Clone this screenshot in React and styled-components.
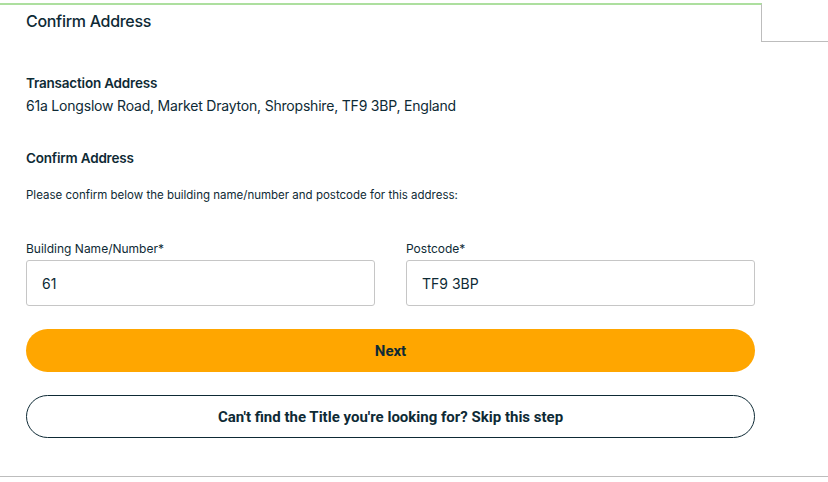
import React from 'react'
import styled, {createGlobalStyle} from 'styled-components'

const Global = createGlobalStyle`
  body {
    margin: 0;
    background: #fff;
    font-family: Inter, "Open Sans", sans-serif;
    color: #0e2a35;
  }
`

const Page = styled.div`
  width: 828px;
  height: 482px;
  padding-top: 3px;
  box-sizing: border-box;
  display: flex;
  flex-direction: column;
`

const TabRow = styled.div`
  display: flex;
  height: 39px;
`

const Tab = styled.div`
  width: 762px;
  box-sizing: border-box;
  border-top: 2px solid #addf9f;
  border-right: 1px solid #bdbdbd;
  padding: 6px 0 0 26px;
  font-size: 16px;
  font-weight: 500;
  letter-spacing: -0.3px;
`

const TabFiller = styled.div`
  flex: 1;
  border-bottom: 1px solid #bdbdbd;
`

const Body = styled.div`
  flex: 1;
  padding: 33px 0 0 26px;
  width: 729px;
  display: flex;
  flex-direction: column;
`

const Heading = styled.div`
  font-size: 13.5px;
  font-weight: 600;
  letter-spacing: -0.2px;
  margin-top: ${p => p.$top || 0}px;
`

const AddressLine = styled.div`
  font-size: 14px;
  margin-top: 6px;
  letter-spacing: -0.2px;
`

const Hint = styled.p`
  font-size: 11.5px;
  margin: 22px 0 0;
`

const Fields = styled.div`
  display: grid;
  grid-template-columns: 349px 349px;
  column-gap: 31px;
  margin-top: 39px;
`

const Field = styled.label`
  display: flex;
  flex-direction: column;
  font-size: 12px;
  gap: 4px;
`

const Input = styled.input`
  height: 46px;
  box-sizing: border-box;
  border: 1px solid #c6c6c6;
  border-radius: 3px;
  padding: 0 15px;
  font-family: Inter, sans-serif;
  font-size: 14px;
  color: #0e2a35;
  outline: none;
`

const Button = styled.button`
  height: 43px;
  border-radius: 22px;
  font-family: Roboto, sans-serif;
  font-weight: 700;
  font-size: 15px;
  color: #0e2a35;
  cursor: pointer;
  background: ${p => (p.$primary ? '#ffa600' : '#fff')};
  border: ${p => (p.$primary ? 'none' : '1px solid #0e2a35')};
  margin-top: ${p => p.$top}px;
`

const Footer = styled.div`
  margin-top: auto;
  border-bottom: 1px solid #bdbdbd;
  margin-bottom: 5px;
`

export default function App() {
  return (
    <Page>
      <Global />
      <TabRow>
        <Tab>Confirm Address</Tab>
        <TabFiller />
      </TabRow>
      <Body>
        <Heading>Transaction Address</Heading>
        <AddressLine>61a Longslow Road, Market Drayton, Shropshire, TF9 3BP, England</AddressLine>
        <Heading $top={36}>Confirm Address</Heading>
        <Hint>Please confirm below the building name/number and postcode for this address:</Hint>
        <Fields>
          <Field>
            Building Name/Number*
            <Input defaultValue="61" />
          </Field>
          <Field>
            Postcode*
            <Input defaultValue="TF9 3BP" />
          </Field>
        </Fields>
        <Button $primary $top={23}>Next</Button>
        <Button $top={23}>Can't find the Title you're looking for? Skip this step</Button>
      </Body>
      <Footer />
    </Page>
  )
}
